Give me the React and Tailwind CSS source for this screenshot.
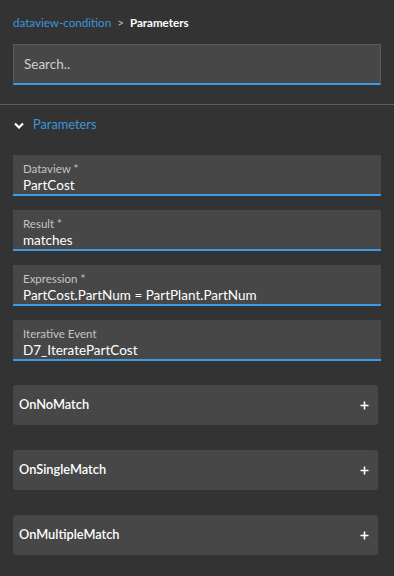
import React from "react";

const font = { fontFamily: 'Lato, "Open Sans", sans-serif' };

function Field({ label, value }) {
  return (
    <div className="h-[41px] bg-[#474747] border-b-2 border-[#3d9be6] pl-[10px] pt-[7px] flex flex-col">
      <div className="text-[11.5px] leading-[14px] text-[#c4c4c4]">{label}</div>
      <div className="text-[13.5px] leading-[18px] text-white">{value}</div>
    </div>
  );
}

function Acc({ label }) {
  return (
    <div className="w-[365px] h-[40px] bg-[#474747] rounded-[3px] flex items-center justify-between pl-[6px] pr-[9px]">
      <span className="text-[12.8px] text-white font-semibold">{label}</span>
      <svg width="9" height="9" viewBox="0 0 9 9">
        <path d="M4.5 0.5v8M0.5 4.5h8" stroke="white" strokeWidth="1.6" />
      </svg>
    </div>
  );
}

export default function App() {
  return (
    <div className="w-[394px] h-[576px] bg-[#333333] overflow-hidden" style={font}>
      <div className="px-[13px] pt-[15px] flex items-center gap-[6px] text-[11.6px] leading-[16px]">
        <span className="text-[#3a96dd]">dataview-condition</span>
        <span className="text-[#bbbbbb]">&gt;</span>
        <span className="text-white font-bold">Parameters</span>
      </div>
      <div className="mx-[13px] mt-[13px] h-[41px] bg-[#474747] border border-[#5c5c5c] border-b-2 border-b-[#3d9be6] flex items-center pl-[10px]">
        <span className="text-[13.5px] text-[#cfcfcf]">Search..</span>
      </div>
      <div className="mt-[19px] h-[1px] bg-[#5c5c5c]" />
      <div className="flex items-center pl-[14px] mt-[11px] h-[18px] gap-[9px]">
        <svg width="10" height="7" viewBox="0 0 10 7">
          <path d="M1 1.5l4 4 4-4" stroke="white" strokeWidth="2.2" fill="none" />
        </svg>
        <span className="text-[12.8px] text-[#3a96dd]">Parameters</span>
      </div>
      <div className="mx-[13px] mt-[21px] flex flex-col gap-[14px]">
        <Field label="Dataview *" value="PartCost" />
        <Field label="Result *" value="matches" />
        <Field label="Expression *" value="PartCost.PartNum = PartPlant.PartNum" />
        <Field label="Iterative Event" value="D7_IteratePartCost" />
      </div>
      <div className="mx-[13px] mt-[24px] flex flex-col gap-[25px]">
        <Acc label="OnNoMatch" />
        <Acc label="OnSingleMatch" />
        <Acc label="OnMultipleMatch" />
      </div>
    </div>
  );
}
